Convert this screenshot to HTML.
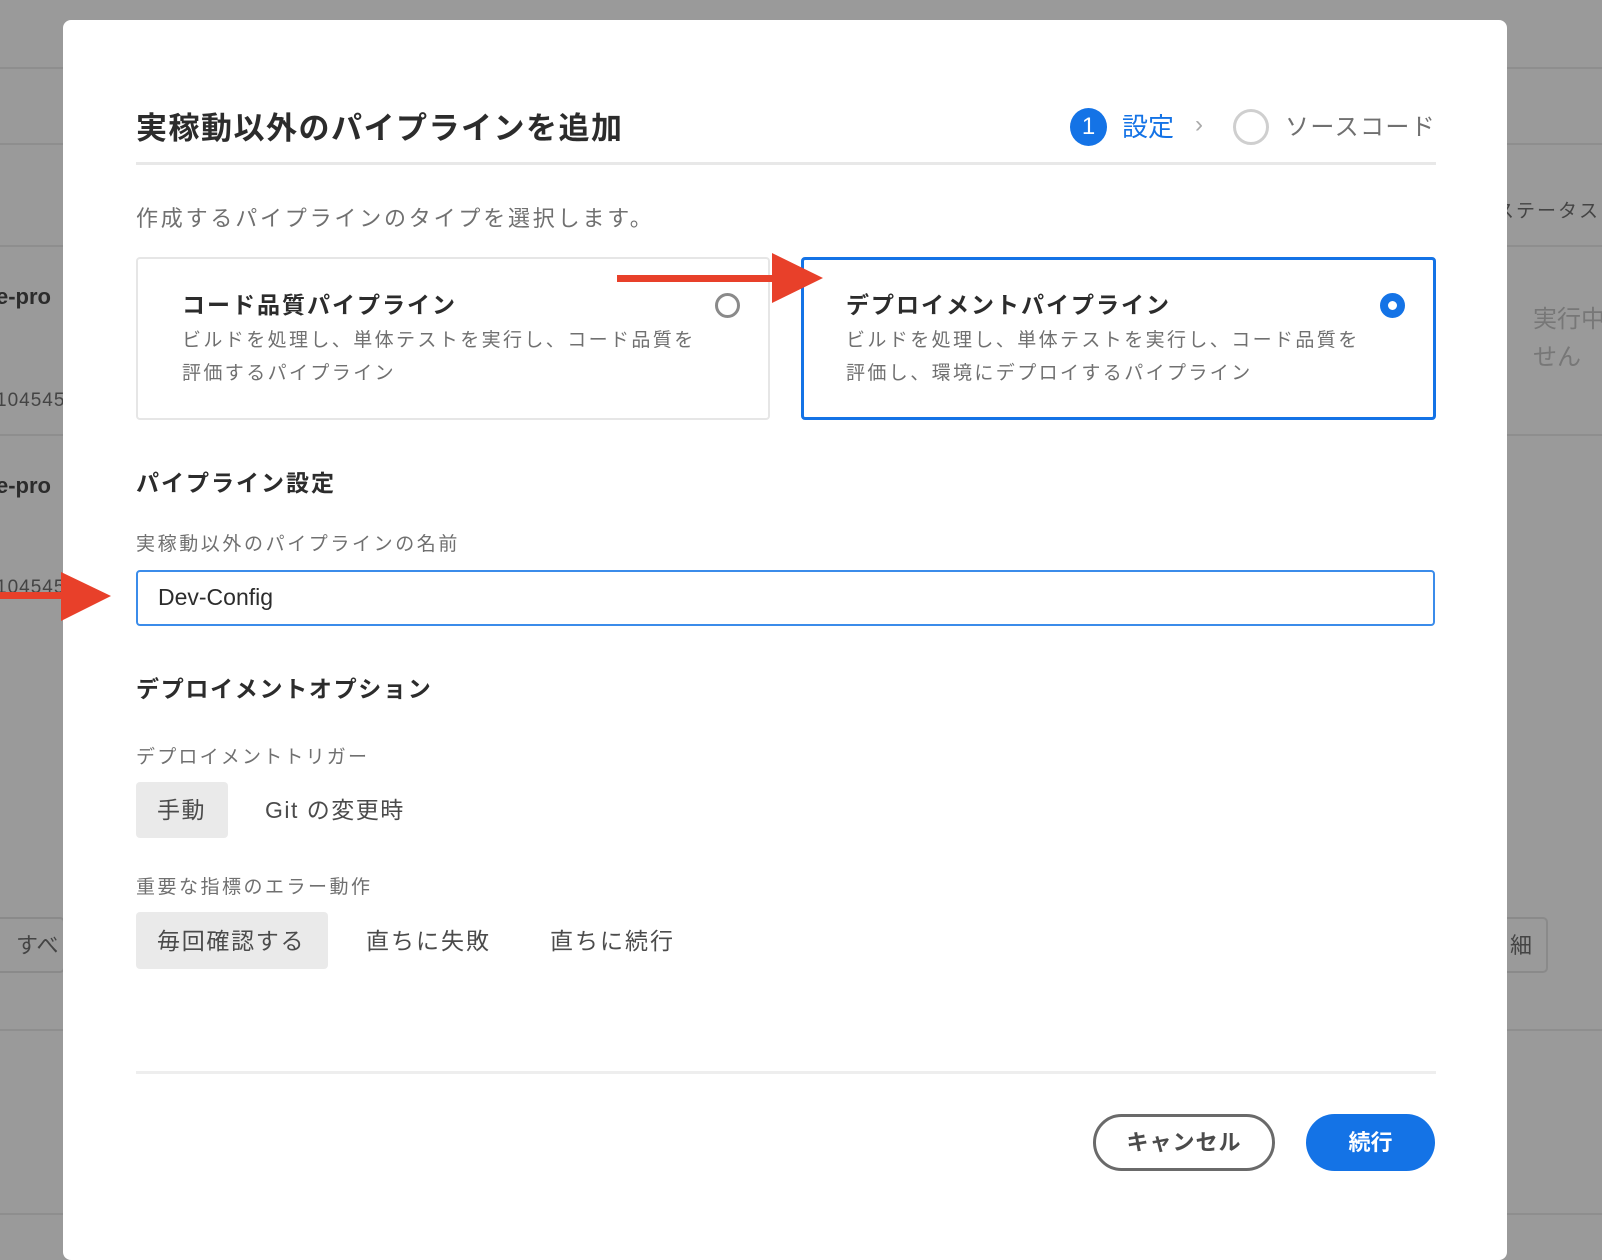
<!DOCTYPE html>
<html><head><meta charset="utf-8"><style>
*{margin:0;padding:0;box-sizing:border-box}
body{width:1602px;height:1242px;background:#9a9a9a;position:relative;overflow:hidden;font-family:"Liberation Sans","Noto Sans CJK JP",sans-serif}
.a{position:absolute;white-space:nowrap}
.hl{position:absolute;left:0;width:1602px;height:2px;background:#8e8e8e}
.modal{position:absolute;left:63px;top:20px;width:1444px;height:1240px;background:#fff;border-radius:8px}
.t{line-height:1}
.g{color:#707070}
.d{color:#2c2c2c}
</style></head><body>
<div class="hl" style="top:67px"></div>
<div class="hl" style="top:143px"></div>
<div class="hl" style="top:245px"></div>
<div class="hl" style="top:434px"></div>
<div class="hl" style="top:1029px"></div>
<div class="hl" style="top:1213px"></div>
<div class="a t" style="left:-4px;top:286px;font-size:22px;font-weight:bold;color:#2c2c2c">e-pro</div>
<div class="a t" style="left:-4px;top:475px;font-size:22px;font-weight:bold;color:#2c2c2c">e-pro</div>
<div class="a t" style="left:-4px;top:391px;font-size:19px;color:#444;letter-spacing:1px">104545</div>
<div class="a t" style="left:-4px;top:578px;font-size:19px;color:#444;letter-spacing:1px">104545</div>
<div class="a" style="left:-10px;top:917px;width:75px;height:56px;border:2px solid #8a8a8a;border-radius:5px"></div>
<div class="a t" style="left:16px;top:935px;font-size:22px;color:#444">すべ</div>
<div class="a t" style="left:1495px;top:202px;font-size:19px;color:#444;letter-spacing:2px">ステータス</div>
<div class="a t" style="left:1533px;top:308px;font-size:24px;color:#777">実行中</div>
<div class="a t" style="left:1533px;top:346px;font-size:24px;color:#777">せん</div>
<div class="a" style="left:1480px;top:917px;width:68px;height:56px;border:2px solid #8a8a8a;border-radius:5px"></div>
<div class="a t" style="left:1510px;top:935px;font-size:22px;color:#444">細</div>

<div class="modal"></div>
<div class="a t d" style="left:136px;top:113px;font-size:31px;font-weight:bold;letter-spacing:1.5px">実稼動以外のパイプラインを追加</div>
<div class="a" style="left:1070px;top:108px;width:37px;height:38px;border-radius:50%;background:#1473e6;color:#fff;font-size:24px;text-align:center;line-height:38px">1</div>
<div class="a t" style="left:1122px;top:114px;font-size:26px;color:#1473e6">設定</div>
<div class="a t" style="left:1195px;top:113px;font-size:24px;color:#aaa">›</div>
<div class="a" style="left:1233px;top:109px;width:36px;height:36px;border-radius:50%;border:3px solid #cfcfcf"></div>
<div class="a t g" style="left:1285px;top:116px;font-size:24px;letter-spacing:1.4px">ソースコード</div>
<div class="a" style="left:136px;top:162px;width:1300px;height:3px;background:#e8e8e8"></div>

<div class="a t g" style="left:136px;top:208px;font-size:22px;letter-spacing:2.8px">作成するパイプラインのタイプを選択します。</div>

<div class="a" style="left:136px;top:257px;width:634px;height:163px;border:2px solid #e6e6e6;border-radius:4px"></div>
<div class="a t d" style="left:182px;top:294px;font-size:23px;font-weight:bold;letter-spacing:2px">コード品質パイプライン</div>
<div class="a" style="left:715px;top:293px;width:25px;height:25px;border-radius:50%;border:3px solid #8a8a8a"></div>
<div class="a t g" style="left:182px;top:331px;font-size:19px;letter-spacing:2.4px">ビルドを処理し、単体テストを実行し、コード品質を</div>
<div class="a t g" style="left:182px;top:364px;font-size:19px;letter-spacing:2.4px">評価するパイプライン</div>

<div class="a" style="left:801px;top:257px;width:635px;height:163px;border:3px solid #1473e6;border-radius:4px"></div>
<div class="a t d" style="left:846px;top:294px;font-size:23px;font-weight:bold;letter-spacing:2px">デプロイメントパイプライン</div>
<div class="a" style="left:1380px;top:293px;width:25px;height:25px;border-radius:50%;border:8px solid #1473e6;background:#fff"></div>
<div class="a t g" style="left:846px;top:331px;font-size:19px;letter-spacing:2.4px">ビルドを処理し、単体テストを実行し、コード品質を</div>
<div class="a t g" style="left:846px;top:364px;font-size:19px;letter-spacing:2.4px">評価し、環境にデプロイするパイプライン</div>

<svg class="a" style="left:0;top:0" width="1602" height="700">
<rect x="617" y="275" width="160" height="7" fill="#e8402a"/>
<polygon points="772,253 823,278 772,303" fill="#e8402a"/>
<rect x="0" y="592" width="64" height="7" fill="#e8402a"/>
<polygon points="61,572 111,596 61,621" fill="#e8402a"/>
</svg>

<div class="a t d" style="left:136px;top:472px;font-size:23px;font-weight:bold;letter-spacing:2px">パイプライン設定</div>
<div class="a t g" style="left:136px;top:535px;font-size:19px;letter-spacing:2.6px">実稼動以外のパイプラインの名前</div>
<div class="a" style="left:136px;top:570px;width:1299px;height:56px;border:2px solid #3b8cea;border-radius:4px"></div>
<div class="a t d" style="left:158px;top:586px;font-size:23px">Dev-Config</div>

<div class="a t d" style="left:136px;top:678px;font-size:23px;font-weight:bold;letter-spacing:1.7px">デプロイメントオプション</div>
<div class="a t g" style="left:136px;top:748px;font-size:19px;letter-spacing:2.2px">デプロイメントトリガー</div>
<div class="a" style="left:136px;top:782px;width:92px;height:56px;background:#eaeaea;border-radius:4px"></div>
<div class="a t" style="left:157px;top:799px;font-size:23px;color:#4b4b4b;letter-spacing:1.5px">手動</div>
<div class="a t" style="left:265px;top:799px;font-size:23px;color:#4b4b4b;letter-spacing:1.5px">Git の変更時</div>

<div class="a t g" style="left:136px;top:878px;font-size:19px;letter-spacing:2.5px">重要な指標のエラー動作</div>
<div class="a" style="left:136px;top:912px;width:192px;height:57px;background:#eaeaea;border-radius:4px"></div>
<div class="a t" style="left:157px;top:930px;font-size:23px;color:#4b4b4b;letter-spacing:1.7px">毎回確認する</div>
<div class="a t" style="left:366px;top:930px;font-size:23px;color:#4b4b4b;letter-spacing:2px">直ちに失敗</div>
<div class="a t" style="left:550px;top:930px;font-size:23px;color:#4b4b4b;letter-spacing:2px">直ちに続行</div>

<div class="a" style="left:136px;top:1071px;width:1300px;height:3px;background:#eeeeee"></div>
<div class="a" style="left:1093px;top:1114px;width:182px;height:57px;border:3px solid #6a6a6a;border-radius:29px;color:#4b4b4b;font-size:22px;font-weight:bold;text-align:center;line-height:51px;letter-spacing:1px">キャンセル</div>
<div class="a" style="left:1306px;top:1114px;width:129px;height:57px;background:#1473e6;border-radius:29px;color:#fff;font-size:22px;font-weight:bold;text-align:center;line-height:57px">続行</div>
</body></html>
